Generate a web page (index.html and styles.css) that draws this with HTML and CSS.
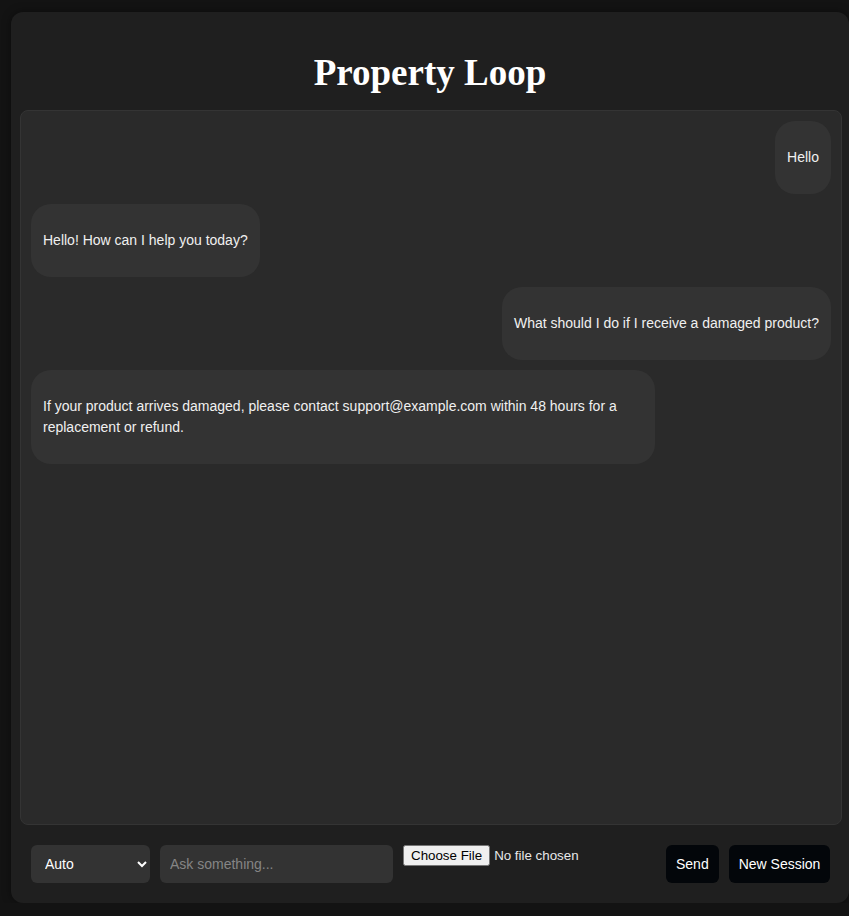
FILE: index.html
```html
<!DOCTYPE html>
<html lang="en">
<head>
<meta charset="utf-8">
<title>Property Loop</title>
<link rel="stylesheet" href="styles.css">
</head>
<body>
<div class="app">
  <header class="header">
    <h1 class="title">Property Loop</h1>
  </header>
  <div class="chat">
    <div class="msg user"><p>Hello</p></div>
    <div class="msg bot"><p>Hello! How can I help you today?</p></div>
    <div class="msg user"><p>What should I do if I receive a damaged product?</p></div>
    <div class="msg bot"><p>If your product arrives damaged, please contact support@example.com within 48 hours for a replacement or refund.</p></div>
  </div>
  <div class="composer">
    <select class="mode">
      <option>Auto</option>
    </select>
    <input class="ask" type="text" placeholder="Ask something..." autofocus>
    <input class="file" type="file">
    <button class="btn">Send</button>
    <button class="btn">New Session</button>
  </div>
</div>
</body>
</html>
```
FILE: styles.css
```css
html, body {
  margin: 0;
  padding: 0;
  background: #131313;
  overflow: hidden;
}

body {
  font-family: "Liberation Sans", Arial, sans-serif;
  color: #eee;
}

.app {
  box-sizing: border-box;
  margin: 12px 0 0 11px;
  width: 838px;
  height: 891px;
  background: #1f1f1f;
  border-radius: 12px;
  display: flex;
  flex-direction: column;
  box-shadow: 0 0 10px rgba(0, 0, 0, 0.4);
}

.header {
  box-sizing: border-box;
  height: 98px;
  padding-top: 40px;
  text-align: center;
}

.title {
  margin: 0;
  font-family: "Liberation Serif", "Times New Roman", serif;
  font-weight: bold;
  font-size: 37px;
  line-height: 41px;
  color: #fff;
}

.chat {
  box-sizing: border-box;
  height: 715px;
  margin: 0 7px 0 9px;
  padding: 10px;
  background: #2a2a2a;
  border: 1px solid #343434;
  border-radius: 8px;
  display: flex;
  flex-direction: column;
  gap: 10px;
  overflow: hidden;
}

.msg {
  box-sizing: border-box;
  background: #333333;
  border-radius: 20px;
  padding: 0 12px;
  max-width: 78%;
  font-size: 14px;
  line-height: 21px;
  color: #f0f0f0;
}

.msg p {
  margin: 26px 0;
}

.msg.user {
  align-self: flex-end;
}

.msg.bot {
  align-self: flex-start;
}

.composer {
  box-sizing: border-box;
  height: 78px;
  padding: 20px 18px 20px 20px;
  display: flex;
  align-items: flex-start;
  gap: 10px;
}

.mode {
  box-sizing: border-box;
  width: 119px;
  height: 38px;
  padding: 0 6px 0 10px;
  background: #333;
  color: #fff;
  border: none;
  border-radius: 6px;
  font-family: "Liberation Sans", Arial, sans-serif;
  font-size: 14px;
  outline: none;
}

.ask {
  box-sizing: border-box;
  width: 233px;
  height: 38px;
  padding: 0 10px;
  background: #333;
  color: #fff;
  border: none;
  border-radius: 6px;
  font-family: "Liberation Sans", Arial, sans-serif;
  font-size: 14px;
  outline: none;
}

.ask::placeholder {
  color: #858585;
}

.file {
  box-sizing: border-box;
  width: 253px;
  color: #e8e8e8;
  font-family: "Liberation Sans", Arial, sans-serif;
  font-size: 13.333px;
}

.btn {
  box-sizing: border-box;
  height: 38px;
  padding: 0 10px;
  background: #03060a;
  color: #fff;
  border: none;
  border-radius: 6px;
  font-family: "Liberation Sans", Arial, sans-serif;
  font-size: 14px;
}
```
